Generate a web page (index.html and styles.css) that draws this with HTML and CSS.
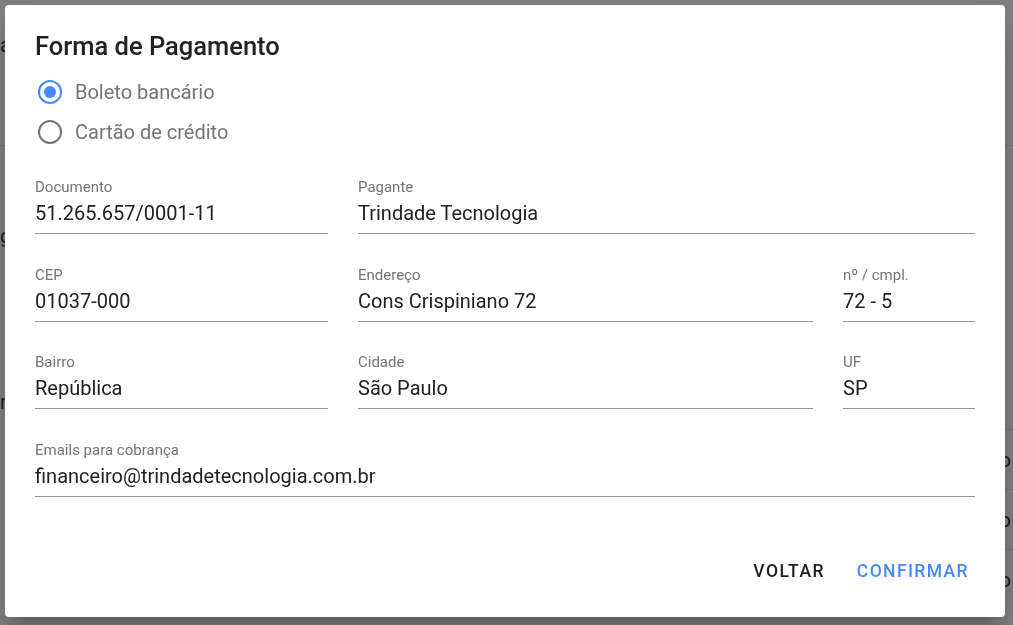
FILE: index.html
```html
<!DOCTYPE html>
<html lang="pt-BR">
<head>
  <meta charset="UTF-8">
  <meta name="viewport" content="width=device-width, initial-scale=1.0">
  <title>Forma de Pagamento</title>
  <link rel="stylesheet" href="styles.css">
</head>
<body>
  <div class="page">
    <div class="page-head"><span class="ghost">a</span></div>
    <div class="page-body">
      <div class="side">
        <span class="ghost">g</span>
        <span class="ghost ghost-r">r</span>
      </div>
      <div class="table">
        <div class="table-row"><span>o</span></div>
        <div class="table-row"><span>o</span></div>
        <div class="table-row"><span>o</span></div>
      </div>
    </div>
  </div>

  <div class="overlay">
    <div class="dialog">
      <h1 class="dialog-title">Forma de Pagamento</h1>

      <div class="radio-group">
        <label class="radio">
          <span class="radio-circle checked"></span>
          <span class="radio-label">Boleto bancário</span>
        </label>
        <label class="radio">
          <span class="radio-circle"></span>
          <span class="radio-label">Cartão de crédito</span>
        </label>
      </div>

      <div class="form">
        <div class="field">
          <div class="field-label">Documento</div>
          <div class="field-value">51.265.657/0001-11</div>
        </div>
        <div class="field col-wide">
          <div class="field-label">Pagante</div>
          <div class="field-value">Trindade Tecnologia</div>
        </div>

        <div class="field">
          <div class="field-label">CEP</div>
          <div class="field-value">01037-000</div>
        </div>
        <div class="field">
          <div class="field-label">Endereço</div>
          <div class="field-value">Cons Crispiniano 72</div>
        </div>
        <div class="field">
          <div class="field-label">nº / cmpl.</div>
          <div class="field-value">72 - 5</div>
        </div>

        <div class="field">
          <div class="field-label">Bairro</div>
          <div class="field-value">República</div>
        </div>
        <div class="field">
          <div class="field-label">Cidade</div>
          <div class="field-value">São Paulo</div>
        </div>
        <div class="field">
          <div class="field-label">UF</div>
          <div class="field-value">SP</div>
        </div>

        <div class="field col-full">
          <div class="field-label">Emails para cobrança</div>
          <div class="field-value">financeiro@trindadetecnologia.com.br</div>
        </div>
      </div>

      <div class="actions">
        <button class="btn">Voltar</button>
        <button class="btn btn-primary">Confirmar</button>
      </div>
    </div>
  </div>
</body>
</html>
```

FILE: styles.css
```css
* {
  box-sizing: border-box;
}
body {
  margin: 0;
  font-family: Roboto, "Noto Sans", Arial, sans-serif;
  background: #fff;
  color: #212121;
  overflow: hidden;
}

/* page behind the dialog */
.page {
  height: 100vh;
}
.page-head {
  height: 146px;
  border-bottom: 1px solid #e6e6e6;
  padding-top: 33px;
}
.ghost {
  display: block;
  font-size: 20px;
  line-height: 24px;
  color: #333;
}
.page-body {
  display: flex;
}
.side {
  width: 200px;
  padding-top: 78px;
}
.ghost-r {
  margin-top: 142px;
}
.table {
  flex: 1;
  padding-top: 283px;
}
.table-row {
  height: 60px;
  border-top: 1px solid #e6e6e6;
  display: flex;
  align-items: center;
  justify-content: flex-end;
  padding-right: 2px;
  font-size: 20px;
  color: #333;
}

/* dialog */
.overlay {
  position: fixed;
  inset: 0;
  background: rgba(0, 0, 0, 0.5);
  padding: 5px;
}
.dialog {
  width: 1000px;
  height: 612px;
  background: #fff;
  border-radius: 4px;
  box-shadow: 0 11px 15px -7px rgba(0, 0, 0, 0.2), 0 24px 38px 3px rgba(0, 0, 0, 0.14);
  padding: 25px 30px 28px;
  display: flex;
  flex-direction: column;
}
.dialog-title {
  margin: 0;
  font-size: 25.5px;
  line-height: 32px;
  font-weight: 500;
  color: #212121;
}
.radio-group {
  margin-top: 10px;
  display: flex;
  flex-direction: column;
}
.radio {
  height: 40px;
  display: flex;
  align-items: center;
  gap: 13px;
  cursor: pointer;
}
.radio-circle {
  width: 24px;
  height: 24px;
  margin-left: 3px;
  border: 2px solid #757575;
  border-radius: 50%;
  display: flex;
  align-items: center;
  justify-content: center;
}
.radio-circle.checked {
  border-color: #448aff;
}
.radio-circle.checked::after {
  content: "";
  width: 12px;
  height: 12px;
  border-radius: 50%;
  background: #448aff;
}
.radio-label {
  font-size: 20px;
  color: #757575;
}

.form {
  margin-top: 27px;
  display: grid;
  grid-template-columns: 293px 455px 132px;
  column-gap: 30px;
  row-gap: 32.5px;
}
.col-wide {
  grid-column: 2 / 4;
}
.col-full {
  grid-column: 1 / 4;
}
.field {
  border-bottom: 1px solid #949494;
  padding-bottom: 8px;
}
.field-label {
  font-size: 15px;
  line-height: 17px;
  color: #757575;
}
.field-value {
  margin-top: 5px;
  font-size: 20px;
  line-height: 24px;
  color: #212121;
}

.actions {
  margin-top: auto;
  margin-right: -10px;
  display: flex;
  justify-content: flex-end;
}
.btn {
  height: 36px;
  padding: 0 16px;
  border: none;
  background: none;
  font-family: inherit;
  font-size: 17.5px;
  font-weight: 500;
  letter-spacing: 1.4px;
  text-transform: uppercase;
  color: #212121;
  cursor: pointer;
}
.btn-primary {
  color: #448aff;
}
```
